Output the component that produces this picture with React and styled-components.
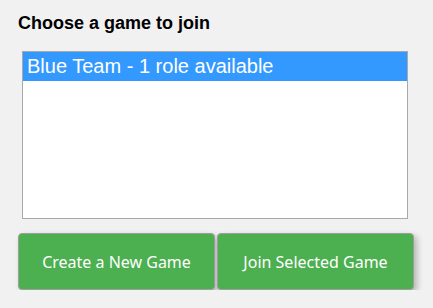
import React, { useState } from "react";
import styled, { createGlobalStyle } from "styled-components";

const GlobalStyle = createGlobalStyle`
  html, body {
    margin: 0;
    background: #f1f1f1;
  }
`;

const games = [{ id: 1, name: "Blue Team", roles: 1 }];

function App() {
  const [selected, setSelected] = useState(1);

  return (
    <JoinStyled>
      <GlobalStyle />
      <h2 className="title">Choose a game to join</h2>
      <GameList>
        {games.map((game) => (
          <GameOption
            key={game.id}
            $active={selected === game.id}
            onClick={() => setSelected(game.id)}
          >
            {game.name} - {game.roles} role available
          </GameOption>
        ))}
      </GameList>
      <Actions>
        <ActionButton>Create a New Game</ActionButton>
        <ActionButton>Join Selected Game</ActionButton>
      </Actions>
    </JoinStyled>
  );
}

const JoinStyled = styled.div`
  padding: 12px 18px 0 18px;
  width: 433px;
  box-sizing: border-box;
  font-family: "Liberation Sans", Arial, sans-serif;
  .title {
    margin: 0 0 17px 0;
    font-size: 18px;
    font-weight: 700;
    color: #000;
    line-height: 22px;
  }
`;

const GameList = styled.div`
  margin: 0 7px 0 4px;
  height: 166px;
  background: #fff;
  border: 1px solid #a9a9a9;
  overflow: auto;
`;

const GameOption = styled.div`
  height: 29px;
  line-height: 29px;
  padding: 0 4px;
  font-size: 20px;
  color: ${(p) => (p.$active ? "#fff" : "#000")};
  background: ${(p) => (p.$active ? "#3399ff" : "transparent")};
  cursor: default;
`;

const Actions = styled.div`
  display: flex;
  gap: 2px;
  margin-top: 14px;
`;

const ActionButton = styled.button`
  width: 197px;
  height: 57px;
  background: #4caf50;
  color: #fff;
  border: 1px solid #9e9e9e;
  border-radius: 4px;
  box-shadow: 3px 3px 6px rgba(0, 0, 0, 0.25);
  font-family: "Noto Sans", "Open Sans", sans-serif;
  font-size: 16px;
  cursor: pointer;
`;

export default App;
